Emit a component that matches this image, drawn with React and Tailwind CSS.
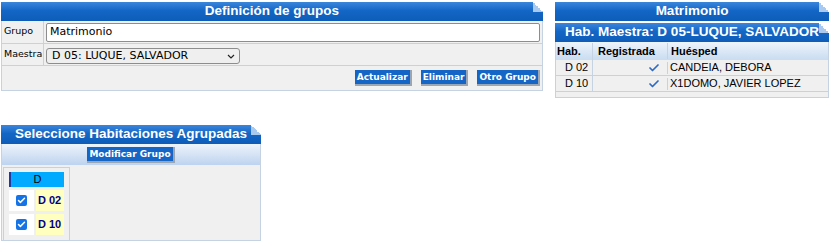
import { Check } from 'lucide-react';

const Corner = () => (
  <div className="absolute right-0 top-0 h-[10px] w-[10px] bg-[linear-gradient(to_bottom_left,#ffffff_50%,#a9c9ee_50%)]" />
);

const Header = ({ children, className = '' }) => (
  <div
    className={`relative flex h-[19px] items-center justify-center whitespace-nowrap bg-[linear-gradient(#3b86dc,#1466c6_45%,#0d5cb9)] font-['Liberation_Sans',sans-serif] text-[13.5px] font-bold text-white ${className}`}
  >
    {children}
    <Corner />
  </div>
);

const Btn = ({ children }) => (
  <button className="h-[16px] border-r-2 border-b-2 border-r-[#9aa6b4] border-b-[#9aa6b4] bg-[#1565c6] px-[2px] font-['DejaVu_Sans',sans-serif] text-[9px] leading-[14px] font-bold text-white">
    {children}
  </button>
);

const App = () => {
  const guests = [
    { hab: 'D 02', name: 'CANDEIA, DEBORA' },
    { hab: 'D 10', name: 'X1DOMO, JAVIER LOPEZ' },
  ];

  return (
    <div className="h-[243px] w-[832px] overflow-hidden bg-white pt-[2px] pl-[1px] font-['DejaVu_Sans',sans-serif] text-[11px] text-black">
      <div className="flex items-start gap-[12px]">
        {/* Definición de grupos */}
        <div className="w-[542px]">
          <Header>Definición de grupos</Header>
          <div className="border border-t-0 border-[#c5d2e2] bg-[#f0f0f0]">
            <div className="flex h-[23px] border-b border-[#c5d2e2]">
              <div className="w-[42px] border-r border-[#c5d2e2] pt-[3px] pl-[2px] text-[9.5px]">Grupo</div>
              <div className="flex-1 pt-[2px] pl-[2px] pr-[2px]">
                <div className="flex h-[19px] items-center rounded-[2px] border border-[#8d8d8d] bg-white px-[3px] text-[11px]">
                  Matrimonio
                </div>
              </div>
            </div>
            <div className="flex h-[22px] border-b border-[#c5d2e2]">
              <div className="w-[42px] border-r border-[#c5d2e2] pt-[3px] pl-[2px] text-[9.5px]">Maestra</div>
              <div className="flex-1 pt-[4px] pl-[2px]">
                <div className="flex h-[16px] w-[194px] items-center justify-between rounded-[3px] border border-[#8d8d8d] bg-[#efefef] pr-[4px] pl-[5px] text-[11px]">
                  <span>D 05: LUQUE, SALVADOR</span>
                  <svg width="8" height="5" viewBox="0 0 8 5" className="mt-[1px]">
                    <path d="M1 1l3 3 3-3" fill="none" stroke="#222" strokeWidth="1.2" />
                  </svg>
                </div>
              </div>
            </div>
            <div className="flex h-[24px] items-center justify-end gap-[9px] pr-[2px]">
              <Btn>Actualizar</Btn>
              <Btn>Eliminar</Btn>
              <Btn>Otro Grupo</Btn>
            </div>
          </div>
        </div>

        {/* Matrimonio */}
        <div className="w-[274px]">
          <Header>Matrimonio</Header>
          <div className="h-[2px] bg-white" />
          <Header className="h-[17px]">Hab. Maestra: D 05-LUQUE, SALVADOR</Header>
          <div className="border border-t-0 border-[#c5d2e2] bg-[#f0f0f0] pb-[5px] font-['Liberation_Sans',sans-serif]">
            <div className="flex h-[18px] items-center bg-[linear-gradient(#eef4fb,#c9dcf2)] text-[11px] font-bold">
              <div className="w-[37px] border-r border-[#c5d2e2] pl-[1px]">Hab.</div>
              <div className="w-[75px] border-r border-[#c5d2e2] pl-[5px]">Registrada</div>
              <div className="flex-1 pl-[3px]">Huésped</div>
            </div>
            {guests.map((g) => (
              <div key={g.hab} className="flex h-[16px] items-center border-b border-[#c5d2e2] text-[11px]">
                <div className="w-[37px] border-r border-[#c5d2e2] pl-[9px]">{g.hab}</div>
                <div className="flex w-[75px] justify-end border-r border-[#c5d2e2] pr-[7px]">
                  <Check size={12} strokeWidth={3.5} className="text-[#2d6bc3]" />
                </div>
                <div className="flex-1 pl-[2px]">{g.name}</div>
              </div>
            ))}
          </div>
        </div>
      </div>

      {/* Seleccione Habitaciones Agrupadas */}
      <div className="mt-[27px] w-[260px]">
        <Header>Seleccione Habitaciones Agrupadas</Header>
        <div className="border border-t-0 border-[#c5d2e2] bg-[#f0f0f0]">
          <div className="flex h-[21px] items-center justify-center bg-[linear-gradient(#eef4fb,#bdd3ef)]">
            <Btn>Modificar Grupo</Btn>
          </div>
          <div className="h-[75px] pt-[2px] pl-[1px]">
            <div className="h-[73px] w-[67px] border border-b-0 border-[#c5d2e2] px-[5px] pt-[4px]">
              <div className="flex h-[15px] items-center justify-center border-l-2 border-[#1e3aa0] bg-[#00aaff] font-['Liberation_Sans',sans-serif] text-[11px]">
                D
              </div>
              {['D 02', 'D 10'].map((d) => (
                <div key={d} className="mt-[3px] flex h-[21px] gap-[2px]">
                  <div className="flex w-[25px] items-center justify-center bg-white">
                    <div className="flex h-[11px] w-[11px] items-center justify-center rounded-[2px] bg-[#1473e6]">
                      <Check size={9} strokeWidth={4} className="text-white" />
                    </div>
                  </div>
                  <div className="flex-1 bg-[#ffffc0] pt-[2px] pl-[2px] font-['Liberation_Sans',sans-serif] text-[11px] font-bold text-[#00008b]">
                    {d}
                  </div>
                </div>
              ))}
            </div>
          </div>
        </div>
      </div>
    </div>
  );
};

export default App;
